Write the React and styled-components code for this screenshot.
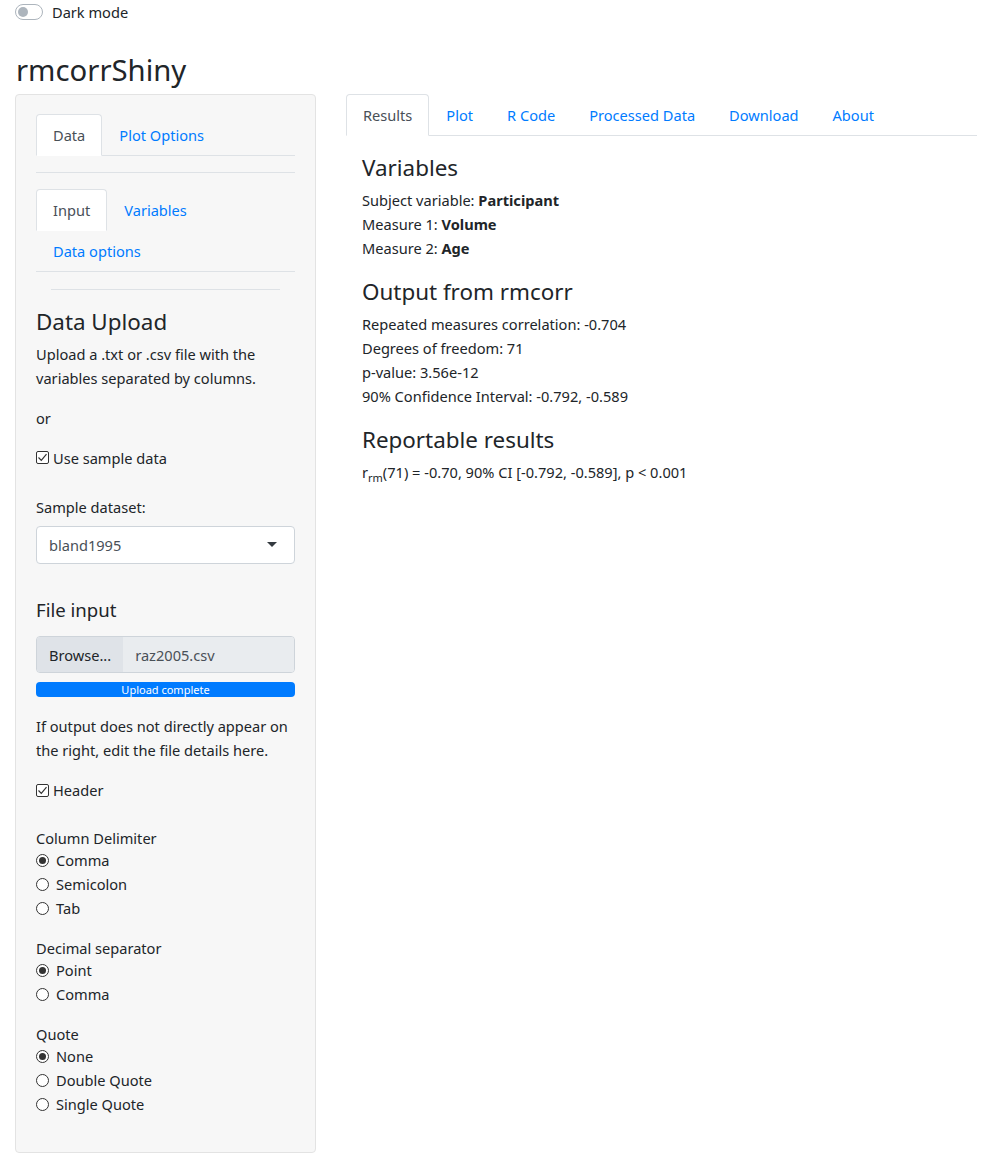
import { createGlobalStyle } from "styled-components";
import styled from "styled-components";

const GlobalStyle = createGlobalStyle`
  body {
    margin: 0;
    background: #ffffff;
    color: #212529;
    font-family: "Noto Sans", "Liberation Sans", sans-serif;
    font-size: 14.6px;
    line-height: 24px;
  }
  * { box-sizing: border-box; }
`;

const Page = styled.div`
  padding: 0 15px;
`;

const TopBar = styled.label`
  display: flex;
  align-items: center;
  gap: 9px;
  height: 24px;
`;

const Switch = styled.span`
  width: 28px;
  height: 16px;
  border: 1px solid #adb5bd;
  border-radius: 8px;
  background: #fff;
  display: flex;
  align-items: center;
  padding-left: 2px;
  &::after {
    content: "";
    width: 10px;
    height: 10px;
    border-radius: 50%;
    background: #adb5bd;
  }
`;

const Title = styled.h2`
  margin: 28px 0 6px 1px;
  font-size: 29.3px;
  font-weight: 400;
  line-height: 36px;
`;

const Row = styled.div`
  display: grid;
  grid-template-columns: 301px 1fr;
  gap: 30px;
  align-items: start;
`;

const Well = styled.div`
  background: #f7f7f7;
  border: 1px solid #e3e3e3;
  border-radius: 4px;
  padding: 19px 20px 20px;
`;

const Tabs = styled.ul`
  display: flex;
  flex-wrap: wrap;
  list-style: none;
  margin: 0;
  padding: 0;
  border-bottom: 1px solid #dee2e6;
`;

const Tab = styled.li`
  padding: 8px 16px;
  margin-bottom: -1px;
  border: 1px solid ${(p) => (p.$active ? "#dee2e6" : "transparent")};
  border-bottom-color: ${(p) => (p.$active ? "#fff" : "transparent")};
  border-radius: 4px 4px 0 0;
  background: ${(p) => (p.$active ? "#fff" : "transparent")};
  color: ${(p) => (p.$active ? "#495057" : "#007bff")};
  line-height: 24px;
  cursor: pointer;
`;

const Rule = styled.hr`
  border: 0;
  border-top: 1px solid #dee2e6;
  margin: ${(p) => p.$margin || "16px 0"};
`;

const Heading = styled.h3`
  font-size: ${(p) => p.$size || "22.4px"};
  font-weight: 400;
  line-height: 1.2;
  margin: ${(p) => p.$margin || "0 0 6px"};
`;

const Para = styled.p`
  margin: 0 0 ${(p) => p.$mb || "16px"};
`;

const CheckRow = styled.label`
  display: flex;
  align-items: center;
  gap: 4px;
  margin-bottom: ${(p) => p.$mb || "25px"};
`;

const CheckBox = styled.span`
  width: 13px;
  height: 13px;
  border: 1px solid #333;
  border-radius: 2px;
  background: #fff;
  display: flex;
  align-items: center;
  justify-content: center;
`;

const FieldLabel = styled.div`
  margin-bottom: ${(p) => p.$gap || "7px"};
`;

const Select = styled.div`
  height: 38px;
  border: 1px solid #ced4da;
  border-radius: 4px;
  background: #fff;
  color: #495057;
  display: flex;
  align-items: center;
  justify-content: space-between;
  padding: 0 17px 0 12px;
  margin-bottom: 35px;
`;

const Caret = styled.span`
  width: 0;
  height: 0;
  border-left: 5px solid transparent;
  border-right: 5px solid transparent;
  border-top: 5px solid #343a40;
`;

const FileGroup = styled.div`
  display: flex;
  height: 37px;
  border: 1px solid #ced4da;
  border-radius: 4px;
  overflow: hidden;
  margin-top: 15px;
`;

const BrowseBtn = styled.span`
  background: #dfe3e8;
  padding: 0 12px;
  display: flex;
  align-items: center;
  color: #212529;
`;

const FileName = styled.span`
  flex: 1;
  background: #e9ecef;
  color: #495057;
  display: flex;
  align-items: center;
  padding-left: 12px;
`;

const Progress = styled.div`
  margin: 9px 0 17px;
  height: 15px;
  border-radius: 4px;
  background: #007bff;
  color: #fff;
  font-size: 11px;
  line-height: 15px;
  text-align: center;
`;

const RadioGroup = styled.div`
  margin-bottom: 16px;
`;

const RadioRow = styled.label`
  display: flex;
  align-items: center;
  gap: 7px;
`;

const Radio = styled.span`
  width: 13px;
  height: 13px;
  border: 1px solid #333;
  border-radius: 50%;
  background: #fff;
  display: flex;
  align-items: center;
  justify-content: center;
  &::after {
    content: "";
    width: 7px;
    height: 7px;
    border-radius: 50%;
    background: ${(p) => (p.$checked ? "#333" : "transparent")};
  }
`;

const Main = styled.div``;

const Content = styled.div`
  padding: 19px 16px 0;
`;

const Sub = styled.sub`
  font-size: 11px;
  vertical-align: -4px;
  line-height: 0;
`;

const Tick = () => (
  <svg width="11" height="11" viewBox="0 0 11 11">
    <path d="M1.5 5.5 L4.3 8.3 L9.5 2.2" fill="none" stroke="#333" strokeWidth="1.2" />
  </svg>
);

const RadioField = ({ label, options, checked }) => (
  <RadioGroup>
    <FieldLabel $gap="-2px">{label}</FieldLabel>
    {options.map((o) => (
      <RadioRow key={o}>
        <Radio $checked={o === checked} />
        {o}
      </RadioRow>
    ))}
  </RadioGroup>
);

export default function App() {
  const mainTabs = ["Results", "Plot", "R Code", "Processed Data", "Download", "About"];
  return (
    <Page>
      <GlobalStyle />
      <TopBar>
        <Switch />
        Dark mode
      </TopBar>
      <Title>rmcorrShiny</Title>
      <Row>
        <Well>
          <Tabs>
            <Tab $active>Data</Tab>
            <Tab>Plot Options</Tab>
          </Tabs>
          <Rule />
          <Tabs>
            <Tab $active>Input</Tab>
            <Tab>Variables</Tab>
            <Tab>Data options</Tab>
          </Tabs>
          <Rule $margin="17px 15px 19px" />
          <Heading $margin="0 0 6px">Data Upload</Heading>
          <Para>
            Upload a .txt or .csv file with the
            <br />
            variables separated by columns.
          </Para>
          <Para>or</Para>
          <CheckRow>
            <CheckBox>
              <Tick />
            </CheckBox>
            Use sample data
          </CheckRow>
          <FieldLabel>Sample dataset:</FieldLabel>
          <Select>
            bland1995
            <Caret />
          </Select>
          <Heading $size="18.6px" $margin="0">File input</Heading>
          <FileGroup>
            <BrowseBtn>Browse...</BrowseBtn>
            <FileName>raz2005.csv</FileName>
          </FileGroup>
          <Progress>Upload complete</Progress>
          <Para>
            If output does not directly appear on
            <br />
            the right, edit the file details here.
          </Para>
          <CheckRow $mb="24px">
            <CheckBox>
              <Tick />
            </CheckBox>
            Header
          </CheckRow>
          <RadioField label="Column Delimiter" options={["Comma", "Semicolon", "Tab"]} checked="Comma" />
          <RadioField label="Decimal separator" options={["Point", "Comma"]} checked="Point" />
          <RadioField label="Quote" options={["None", "Double Quote", "Single Quote"]} checked="None" />
        </Well>
        <Main>
          <Tabs>
            {mainTabs.map((t, i) => (
              <Tab key={t} $active={i === 0}>
                {t}
              </Tab>
            ))}
          </Tabs>
          <Content>
            <Heading>Variables</Heading>
            <Para $mb="19px">
              Subject variable: <b>Participant</b>
              <br />
              Measure 1: <b>Volume</b>
              <br />
              Measure 2: <b>Age</b>
            </Para>
            <Heading>Output from rmcorr</Heading>
            <Para $mb="19px">
              Repeated measures correlation: -0.704
              <br />
              Degrees of freedom: 71
              <br />
              p-value: 3.56e-12
              <br />
              90% Confidence Interval: -0.792, -0.589
            </Para>
            <Heading>Reportable results</Heading>
            <Para>
              r<Sub>rm</Sub>(71) = -0.70, 90% CI [-0.792, -0.589], p &lt; 0.001
            </Para>
          </Content>
        </Main>
      </Row>
    </Page>
  );
}
